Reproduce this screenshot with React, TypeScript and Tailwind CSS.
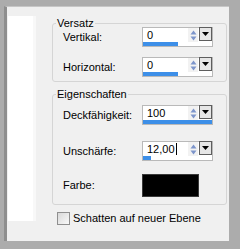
import React from "react";

const font = { fontFamily: '"Liberation Sans", Arial, sans-serif' };

function Spin({ value, pct, cursor }: { value: string; pct: number; cursor?: boolean }) {
  return (
    <div className="w-[71px] h-[20px] border border-[#b9b9b9] bg-white flex flex-col">
      <div className="flex h-[14px]">
        <div className="flex-1 pl-[4px] flex items-center text-[11px] leading-[14px] text-black">
          <span>{value}</span>
          {cursor && <span className="inline-block w-[1px] h-[12px] bg-black ml-[1px]" />}
        </div>
        <div className="w-[10px] flex flex-col items-center justify-center gap-[1px] bg-[#f2f2f2] mr-[1px]">
          <svg width="7" height="5" viewBox="0 0 7 5">
            <path d="M3.5 0.5 L6.5 4.5 L0.5 4.5 Z" fill="#7d95cb" />
          </svg>
          <svg width="7" height="5" viewBox="0 0 7 5">
            <path d="M0.5 0.5 L6.5 0.5 L3.5 4.5 Z" fill="#7d95cb" />
          </svg>
        </div>
        <div className="w-[13px] h-[14px] -mt-[1px] border border-[#5e5e5e] bg-[#e6e6e6] flex items-center justify-center">
          <svg width="7" height="4" viewBox="0 0 7 4">
            <path d="M0 0 L7 0 L3.5 4 Z" fill="#000" />
          </svg>
        </div>
      </div>
      <div className="h-[4px] mt-auto">
        <div className="h-full bg-[#3d8fe8]" style={{ width: `${pct}%` }} />
      </div>
    </div>
  );
}

function Row({ label, children, className }: { label: string; children: React.ReactNode; className?: string }) {
  return (
    <div className={`flex items-center ${className ?? ""}`}>
      <div className="w-[79px] text-[11px] leading-[13px] text-black whitespace-nowrap">{label}</div>
      {children}
    </div>
  );
}

export default function App() {
  return (
    <div
      className="w-[240px] h-[249px] bg-[#acacac] flex pt-[6px] pl-[4px] pr-[11px] pb-[8px]"
      style={font}
    >
      <div className="flex-1 flex bg-[#f0f0f0] border-l-[3px] border-l-[#8e8e8e] border-t border-t-[#c6c6c6]">
        <div className="ml-[1px] mt-[9px] w-[28px] h-[205px] bg-white border-r-[3px] border-r-[#f8f8f8]" />
        <div className="ml-[16px] w-[175px] flex flex-col">
          <fieldset className="mt-[10px] border border-[#d5d5d5] rounded-[3px] pl-[10px] pr-[12px] pb-[4px]">
            <legend className="ml-[-7px] px-[1px] h-[12px] leading-[12px] text-[11px] text-black">Versatz</legend>
            <Row label="Vertikal:" className="-mt-[2px]">
              <Spin value="0" pct={50} />
            </Row>
            <Row label="Horizontal:" className="mt-[10px]">
              <Spin value="0" pct={50} />
            </Row>
          </fieldset>
          <fieldset className="mt-[6px] border border-[#d5d5d5] rounded-[3px] pl-[10px] pr-[12px] pb-[7px]">
            <legend className="ml-[-7px] px-[1px] h-[12px] leading-[12px] text-[11px] text-black">Eigenschaften</legend>
            <Row label="Deckfähigkeit:" className="mt-[5px]">
              <Spin value="100" pct={100} />
            </Row>
            <Row label="Unschärfe:" className="mt-[16px]">
              <Spin value="12,00" pct={12} cursor />
            </Row>
            <Row label="Farbe:" className="mt-[13px]">
              <div className="w-[57px] h-[23px] bg-black border border-[#3a3a3a]" />
            </Row>
          </fieldset>
          <div className="mt-[7px] flex items-center">
            <div className="ml-[5px] w-[13px] h-[13px] border border-[#8f8f8f] bg-gradient-to-br from-[#d8d8d8] to-[#f9f9f9]" />
            <span className="ml-[3px] text-[11px] leading-[13px] text-black whitespace-nowrap">Schatten auf neuer Ebene</span>
          </div>
        </div>
      </div>
    </div>
  );
}
